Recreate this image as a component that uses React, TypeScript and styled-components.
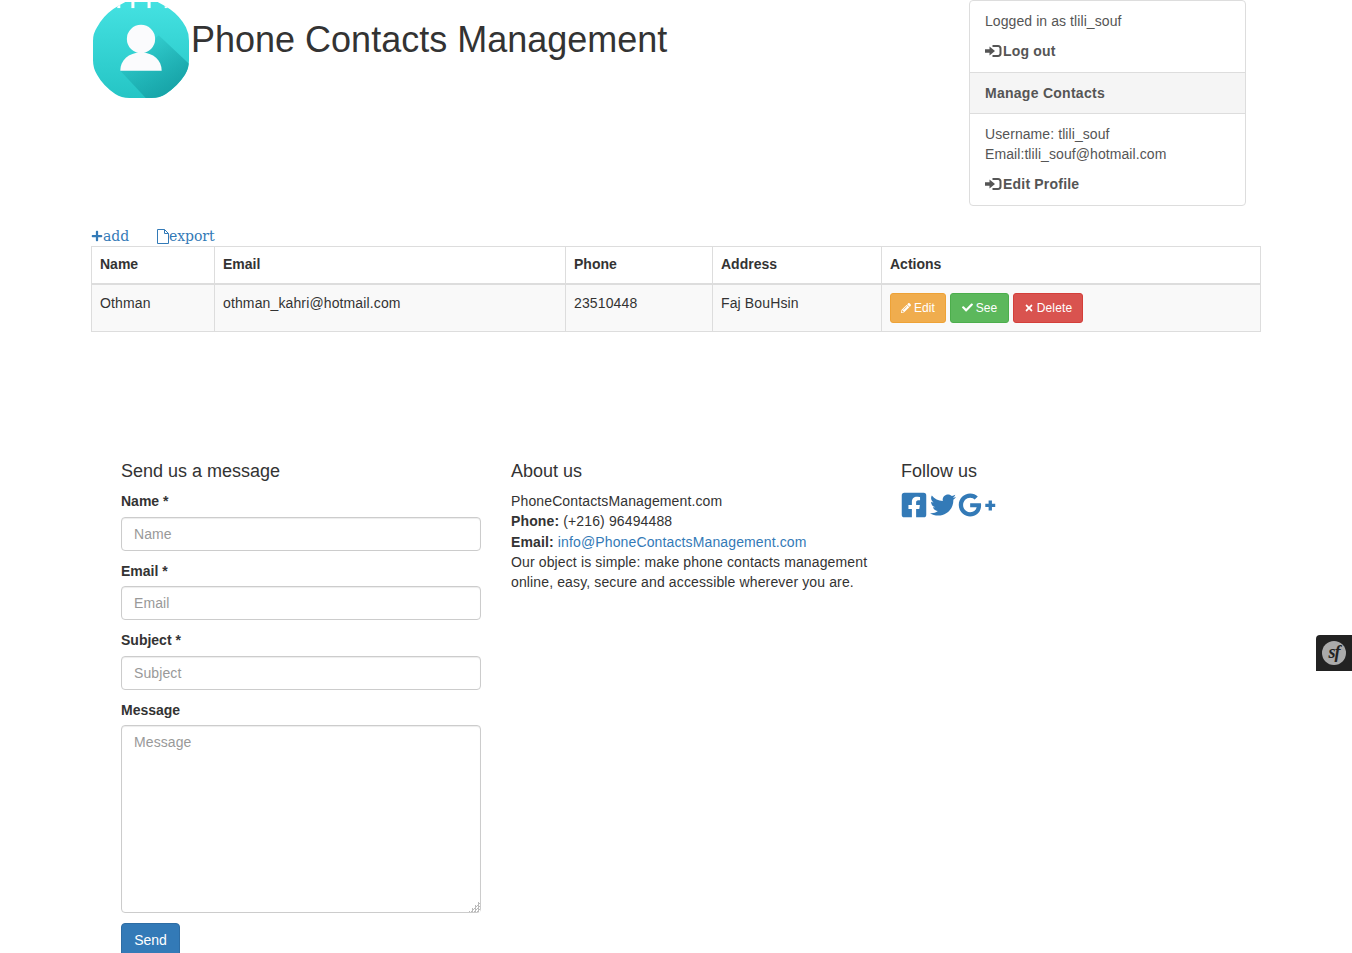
import React from 'react'
import styled, { createGlobalStyle } from 'styled-components'
import { FaCheck, FaFacebookSquare, FaGooglePlusG, FaPencilAlt, FaPlus, FaTimes, FaTwitter } from 'react-icons/fa'

const GlobalStyle = createGlobalStyle`
  * { box-sizing: border-box; }
  html, body { margin: 0; padding: 0; }
  body {
    background: #fff;
    color: #333;
    font-family: "Liberation Sans", Arial, sans-serif;
    font-size: 14px;
    line-height: 20px;
    letter-spacing: 0.13px;
  }
`

const Page = styled.div`
  width: 1170px;
  margin: 0 auto;
`

const Header = styled.header`
  display: flex;
  align-items: flex-start;
  height: 206px;
`

const Title = styled.h1`
  flex: 1;
  margin: 20px 0 0;
  font-size: 36px;
  font-weight: 500;
  line-height: 39.6px;
  letter-spacing: 0;
`

const SidePanel = styled.aside`
  width: 277px;
  height: 206px;
  margin-right: 15px;
  border: 1px solid #ddd;
  border-radius: 4px;
  color: #555;
  letter-spacing: 0.08px;
`

const PanelSection = styled.div`
  padding: 10px 15px;
  & + div { margin-top: 1px; }
`

const PanelHeading = styled.div`
  height: 42px;
  padding: 10px 15px;
  background: #f5f5f5;
  border-top: 1px solid #ddd;
  border-bottom: 1px solid #ddd;
  font-weight: 700;
  letter-spacing: 0.27px;
`

const PanelAction = styled.a`
  display: flex;
  align-items: center;
  margin-top: 10px;
  font-weight: 700;
  color: #555;
  letter-spacing: 0.2px;
`

const Links = styled.div`
  display: flex;
  height: 40px;
  padding-top: 20px;
  gap: 28px;
  font-family: "DejaVu Serif", serif;
  font-size: 14px;
  line-height: 20px;
  letter-spacing: -0.08px;
  color: #337ab7;
`

const TextLink = styled.a`
  display: flex;
  align-items: center;
  color: #337ab7;
`

const Table = styled.table`
  width: 1169px;
  table-layout: fixed;
  border-collapse: collapse;
  border: 1px solid #ddd;
`

const Th = styled.th`
  height: 37px;
  padding: 7px 8px 8px;
  text-align: left;
  border: 1px solid #ddd;
  border-bottom: 2px solid #ddd;
  font-weight: 700;
  letter-spacing: 0;
`

const Td = styled.td`
  height: 47px;
  padding: 8px;
  vertical-align: top;
  border: 1px solid #ddd;
  background: #f9f9f9;
`

const Actions = styled.div`
  display: flex;
  gap: 4px;
`

const ActionButton = styled.a<{ $bg: string; $border: string; $width: number }>`
  display: flex;
  align-items: center;
  justify-content: center;
  gap: 3px;
  width: ${({ $width }) => $width}px;
  height: 30px;
  border: 1px solid ${({ $border }) => $border};
  border-radius: 3px;
  background: ${({ $bg }) => $bg};
  color: #fff;
  font-size: 12px;
  line-height: 18px;
`

const Footer = styled.footer`
  display: grid;
  grid-template-columns: repeat(3, 390px);
  margin-top: 129px;
  padding-left: 30px;
`

const Column = styled.section`
  width: 360px;
`

const Heading = styled.h3`
  margin: 0 0 10px;
  font-size: 18px;
  font-weight: 500;
  line-height: 20px;
  letter-spacing: 0;
`

const Label = styled.label<{ $gap: number }>`
  display: block;
  margin-bottom: ${({ $gap }) => $gap}px;
  font-weight: 700;
  letter-spacing: 0;
`

const Field = styled.div`
  margin-bottom: 10px;
`

const Input = styled.input`
  display: block;
  width: 100%;
  height: 34px;
  padding: 6px 12px;
  border: 1px solid #ccc;
  border-radius: 4px;
  box-shadow: inset 0 1px 1px rgba(0, 0, 0, 0.075);
  color: #555;
  font: 14px/20px "Liberation Sans", Arial, sans-serif;
  letter-spacing: 0.1px;
  &::placeholder { color: #999; opacity: 1; }
`

const TextArea = styled.textarea`
  display: block;
  width: 100%;
  height: 188px;
  padding: 6px 12px;
  border: 1px solid #ccc;
  border-radius: 4px;
  box-shadow: inset 0 1px 1px rgba(0, 0, 0, 0.075);
  color: #555;
  font: 14px/20px "Liberation Sans", Arial, sans-serif;
  letter-spacing: 0.1px;
  resize: vertical;
  &::placeholder { color: #999; opacity: 1; }
  &::-webkit-resizer {
    background:
      linear-gradient(135deg, #fff 62%, transparent 62%),
      repeating-conic-gradient(#bbb 0 25%, #fff 0 50%) 0 0 / 3px 3px;
  }
`

const SendButton = styled.button`
  display: block;
  width: 59px;
  height: 34px;
  padding: 6px 12px;
  border: 1px solid #2e6da4;
  border-radius: 4px;
  background: #337ab7;
  color: #fff;
  font: 14px/20px "Liberation Sans", Arial, sans-serif;
`

const AboutBody = styled.div`
  padding-top: 0.45px;
`

const AboutLine = styled.div`
  line-height: 20.3px;
`

const MailLink = styled.a`
  color: #337ab7;
`

const Social = styled.div`
  display: flex;
  align-items: center;
  height: 28px;
  margin: 0.45px 0 0 -1px;
  color: #337ab7;
`

const DebugBar = styled.div`
  position: fixed;
  right: 0;
  top: 635px;
  display: flex;
  align-items: center;
  justify-content: center;
  width: 36px;
  height: 36px;
  background: #222;
  border-top-left-radius: 4px;
`

const SfBadge = styled.span`
  display: block;
  width: 24px;
  height: 24px;
  border-radius: 50%;
  background: #aaa;
  color: #222;
  font: italic 700 18px/22px "Liberation Serif", serif;
  letter-spacing: -1px;
  text-align: center;
`

const Logo = () => (
  <svg width="100" height="100" viewBox="0 0 99 99" style={{ flexShrink: 0 }}>
    <defs>
      <linearGradient id="logoFill" x1="0" y1="0" x2="0" y2="1">
        <stop offset="0" stopColor="#45e2e2" />
        <stop offset="1" stopColor="#24c4c4" />
      </linearGradient>
      <linearGradient id="logoShadow" x1="0.2" y1="0.2" x2="0.8" y2="0.9">
        <stop offset="0" stopColor="#17a0a5" stopOpacity="0.15" />
        <stop offset="1" stopColor="#149ca1" stopOpacity="0.9" />
      </linearGradient>
      <clipPath id="logoClip">
        <path d="M2 40 Q2 33 6 27 Q12 16 22 9 Q28 5 34 2 H66 Q72 5 78 9 Q88 16 94 27 Q97 33 97 40 V60 Q97 68 93 74 Q86 85 74 93 Q68 97 60 97 H38 Q30 97 24 93 Q12 85 6 74 Q2 68 2 60 Z" />
      </clipPath>
    </defs>
    <g clipPath="url(#logoClip)">
      <rect width="100" height="100" fill="url(#logoFill)" />
      <path d="M67 35 L100 66 V100 H57 L29 70 Z" fill="url(#logoShadow)" />
      <rect x="26" y="0" width="3" height="8" fill="#fff" />
      <rect x="40" y="0" width="3" height="8" fill="#fff" />
      <rect x="56" y="0" width="3" height="8" fill="#fff" />
      <rect x="73" y="0" width="3" height="8" fill="#fff" />
    </g>
    <circle cx="49.500" cy="38.500" r="14" fill="#fbfbfd" />
    <path d="M29 70 C29 60 37 52 49.500 52 C62 52 70 60 70 70 Z" fill="#fbfbfd" />
  </svg>
)

const LoginIcon = () => (
  <svg width="18" height="14" viewBox="0 0 18 14" fill="currentColor">
    <path d="M0 5.200h4.500V2.500L10 7l-5.500 4.500V8.800H0z" />
    <path d="M7.500 1h5.500c2.200 0 3.500 1.300 3.500 3.200v5.600c0 1.900-1.300 3.200-3.500 3.200H7.500v-2h5.300c1 0 1.700-.6 1.700-1.500V4.500c0-.9-.7-1.500-1.700-1.500H7.500z" />
  </svg>
)

const FileIcon = () => (
  <svg width="12" height="15" viewBox="0 0 12 15" fill="none" stroke="currentColor" strokeWidth="1">
    <path d="M.5.500h7l4 4v10h-11zM7.500.500v4h4" />
  </svg>
)

const columns = ['Name', 'Email', 'Phone', 'Address', 'Actions']
const widths = [123, 351, 147, 169, 379]

const App = () => (
  <>
    <GlobalStyle />
    <Page>
      <Header>
        <Logo />
        <Title>Phone Contacts Management</Title>
        <SidePanel>
          <PanelSection>
            <div>Logged in as tlili_souf</div>
            <PanelAction><LoginIcon />Log out</PanelAction>
          </PanelSection>
          <PanelHeading>Manage Contacts</PanelHeading>
          <PanelSection>
            <div>Username: tlili_souf</div>
            <div>Email:tlili_souf@hotmail.com</div>
            <PanelAction><LoginIcon />Edit Profile</PanelAction>
          </PanelSection>
        </SidePanel>
      </Header>

      <Links>
        <TextLink><FaPlus size={12} />add</TextLink>
        <TextLink><FileIcon />export</TextLink>
      </Links>

      <Table>
        <colgroup>
          {widths.map((w, i) => <col key={i} width={w} />)}
        </colgroup>
        <thead>
          <tr>{columns.map((c) => <Th key={c}>{c}</Th>)}</tr>
        </thead>
        <tbody>
          <tr>
            <Td>Othman</Td>
            <Td>othman_kahri@hotmail.com</Td>
            <Td>23510448</Td>
            <Td>Faj BouHsin</Td>
            <Td>
              <Actions>
                <ActionButton $bg="#f0ad4e" $border="#eea236" $width={56}><FaPencilAlt size={10} />Edit</ActionButton>
                <ActionButton $bg="#5cb85c" $border="#4cae4c" $width={59}><FaCheck size={11} />See</ActionButton>
                <ActionButton $bg="#d9534f" $border="#d43f3a" $width={70}><FaTimes size={10} />Delete</ActionButton>
              </Actions>
            </Td>
          </tr>
        </tbody>
      </Table>

      <Footer>
        <Column>
          <Heading>Send us a message</Heading>
          <Field>
            <Label $gap={6}>Name *</Label>
            <Input placeholder="Name" />
          </Field>
          <Field>
            <Label $gap={5}>Email *</Label>
            <Input placeholder="Email" />
          </Field>
          <Field>
            <Label $gap={6}>Subject *</Label>
            <Input placeholder="Subject" />
          </Field>
          <Field>
            <Label $gap={5}>Message</Label>
            <TextArea placeholder="Message" />
          </Field>
          <SendButton>Send</SendButton>
        </Column>
        <Column>
          <Heading>About us</Heading>
          <AboutBody>
            <AboutLine>PhoneContactsManagement.com</AboutLine>
            <AboutLine><b>Phone:</b> (+216) 96494488</AboutLine>
            <AboutLine><b>Email:</b> <MailLink>info@PhoneContactsManagement.com</MailLink></AboutLine>
            <AboutLine>Our object is simple: make phone contacts management online, easy, secure and accessible wherever you are.</AboutLine>
          </AboutBody>
        </Column>
        <Column>
          <Heading>Follow us</Heading>
          <Social>
            <FaFacebookSquare size={28} />
            <FaTwitter size={26} style={{ marginLeft: 2 }} />
            <FaGooglePlusG size={38} style={{ marginLeft: 2 }} />
          </Social>
        </Column>
      </Footer>
    </Page>
    <DebugBar><SfBadge>sf</SfBadge></DebugBar>
  </>
)

export default App
